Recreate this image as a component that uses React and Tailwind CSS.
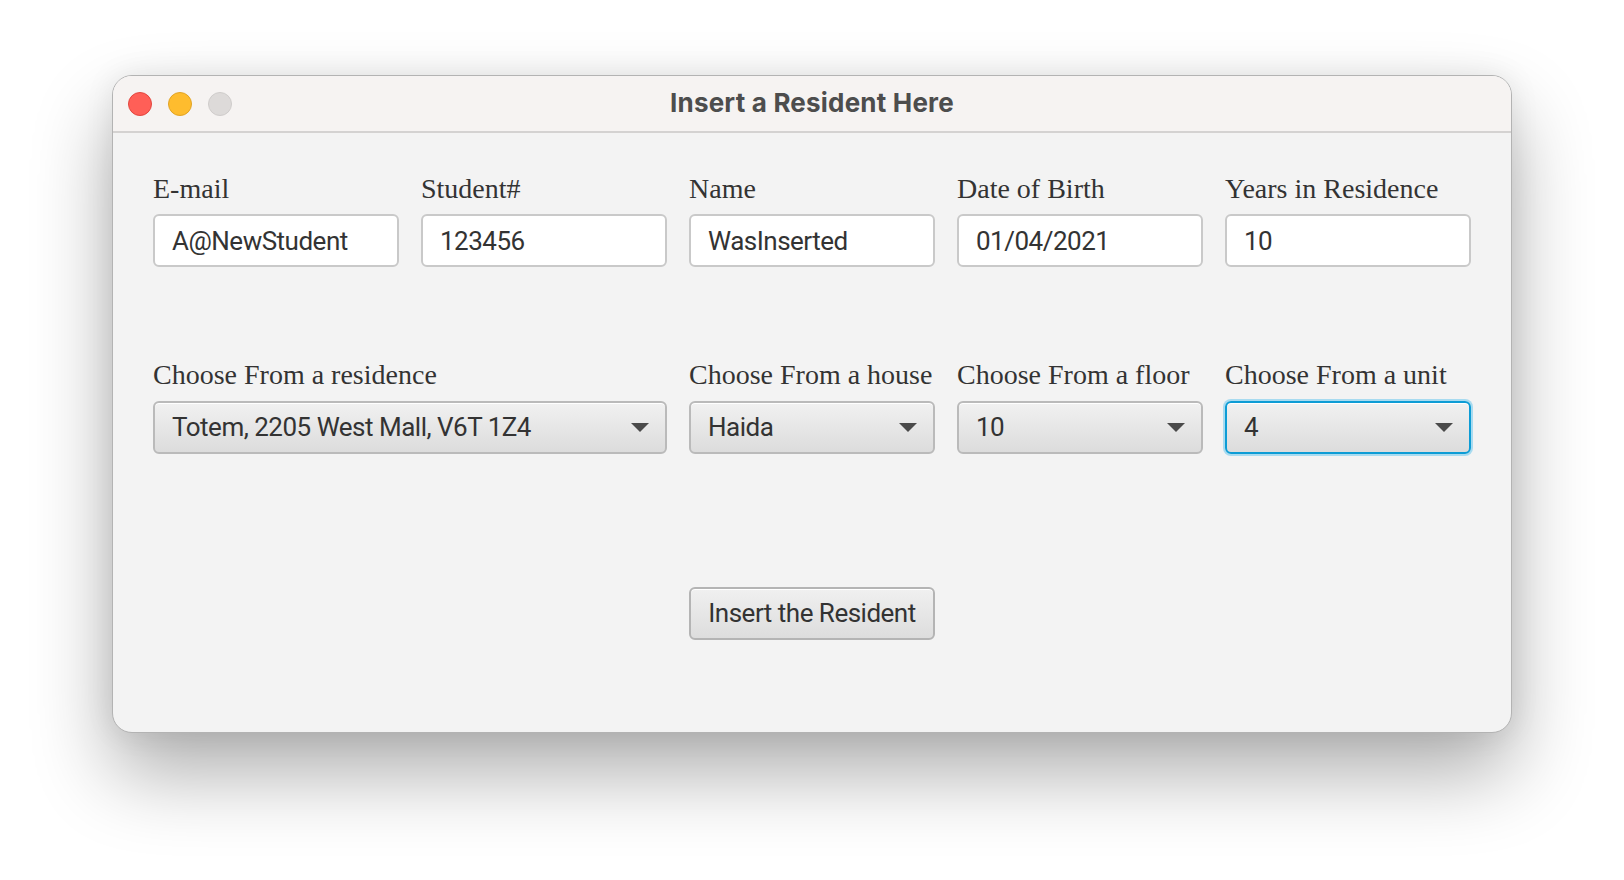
import { useState } from "react";

const sans = "font-['Roboto','Inter',sans-serif] tracking-[-0.5px]";

function Field({ label, value }) {
  return (
    <div className="flex flex-col">
      <label className="font-['Liberation_Serif',serif] text-[28px] leading-[32px] text-[#333] whitespace-nowrap">
        {label}
      </label>
      <input
        readOnly
        value={value}
        className={`mt-[9px] h-[53px] w-full rounded-[6px] border-2 border-[#c9c9c9] bg-white px-[17px] text-[26px] text-[#333] outline-none ${sans}`}
      />
    </div>
  );
}

function Combo({ label, value, focused, span }) {
  return (
    <div className={`flex flex-col ${span ? "col-span-2" : ""}`}>
      <label className="font-['Liberation_Serif',serif] text-[28px] leading-[32px] text-[#333] whitespace-nowrap">
        {label}
      </label>
      <div
        className={`mt-[10px] flex h-[53px] items-center justify-between rounded-[6px] border-2 bg-gradient-to-b from-[#f1f1f1] to-[#dcdcdc] pl-[17px] pr-[16px] shadow-[inset_0_1px_0_#fff] ${
          focused
            ? "border-[#0d9cd5] ring-2 ring-[#a8dbf0]"
            : "border-[#bababa]"
        }`}
      >
        <span className={`text-[26px] text-[#333] ${sans}`}>{value}</span>
        <svg width="18" height="10" viewBox="0 0 18 10">
          <path d="M0 0 L18 0 L9 9 Z" fill="#4a4a4a" />
        </svg>
      </div>
    </div>
  );
}

export default function App() {
  const [fields] = useState([
    ["E-mail", "A@NewStudent"],
    ["Student#", "123456"],
    ["Name", "WasInserted"],
    ["Date of Birth", "01/04/2021"],
    ["Years in Residence", "10"],
  ]);

  return (
    <div className="min-h-screen bg-white pt-[75px]">
      <div className="mx-auto w-[1400px] h-[658px] overflow-hidden rounded-[20px] border border-[#b3b3b3] bg-[#f3f3f3] shadow-[0_40px_80px_rgba(0,0,0,0.32),0_0_30px_rgba(0,0,0,0.08)]">
        {/* title bar */}
        <div className="relative flex h-[57px] items-center justify-center border-b-2 border-[#d4d2d1] bg-[#f6f3f2]">
          <div className="absolute left-[15px] top-[16px] flex gap-[16px]">
            <span className="h-[24px] w-[24px] rounded-full border border-[#e2463f] bg-[#ff5f57]" />
            <span className="h-[24px] w-[24px] rounded-full border border-[#e1a325] bg-[#febc2e]" />
            <span className="h-[24px] w-[24px] rounded-full border border-[#cfcccb] bg-[#dddad9]" />
          </div>
          <span className="font-['Inter',sans-serif] text-[26px] font-bold tracking-[0.2px] text-[#4d4d4d] -mt-[3px]">
            Insert a Resident Here
          </span>
        </div>

        {/* form */}
        <div className="px-[40px] pt-[40px]">
          <div className="grid grid-cols-5 gap-x-[22px]">
            {fields.map(([l, v]) => (
              <Field key={l} label={l} value={v} />
            ))}
          </div>

          <div className="mt-[92px] grid grid-cols-5 gap-x-[22px]">
            <Combo span label="Choose From a residence" value="Totem, 2205 West Mall, V6T 1Z4" />
            <Combo label="Choose From a house" value="Haida" />
            <Combo label="Choose From a floor" value="10" />
            <Combo label="Choose From a unit" value="4" focused />
          </div>

          <div className="mt-[133px] flex justify-center">
            <button
              className={`h-[53px] w-[246px] rounded-[6px] border-2 border-[#b4b4b4] bg-gradient-to-b from-[#f0f0f0] to-[#dddddd] text-[26px] text-[#333] shadow-[inset_0_1px_0_#fff] ${sans}`}
            >
              Insert the Resident
            </button>
          </div>
        </div>
      </div>
    </div>
  );
}
